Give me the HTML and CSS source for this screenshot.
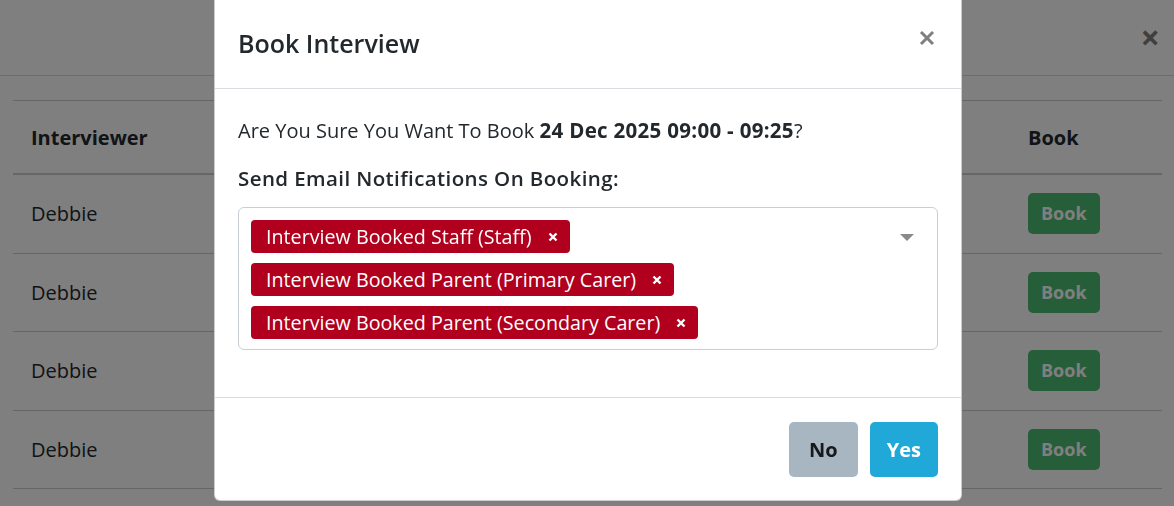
FILE: index.html
```html
<!DOCTYPE html>
<html lang="en">
<head>
<meta charset="utf-8">
<title>Book Interview</title>
<link rel="stylesheet" href="styles.css">
</head>
<body>
<div class="page">
  <div class="page-header">
    <span class="page-close" aria-label="Close">&times;</span>
  </div>
  <div class="table">
    <div class="row head">
      <div class="cell">Interviewer</div>
      <div class="cell"></div>
      <div class="cell">Book</div>
    </div>
    <div class="row">
      <div class="cell">Debbie</div>
      <div class="cell"></div>
      <div class="cell"><span class="btn-book">Book</span></div>
    </div>
    <div class="row">
      <div class="cell">Debbie</div>
      <div class="cell"></div>
      <div class="cell"><span class="btn-book">Book</span></div>
    </div>
    <div class="row">
      <div class="cell">Debbie</div>
      <div class="cell"></div>
      <div class="cell"><span class="btn-book">Book</span></div>
    </div>
    <div class="row">
      <div class="cell">Debbie</div>
      <div class="cell"></div>
      <div class="cell"><span class="btn-book">Book</span></div>
    </div>
  </div>
</div>

<div class="backdrop"></div>

<div class="modal">
  <div class="modal-header">
    <h5 class="modal-title">Book Interview</h5>
    <span class="modal-close" aria-label="Close">
      <svg width="16" height="16" viewBox="0 0 16 16"><path d="M2 2 L14 14 M14 2 L2 14" stroke="#808080" stroke-width="3" stroke-linecap="butt"/></svg>
    </span>
  </div>
  <div class="modal-body">
    <p class="question">Are You Sure You Want To Book <b class="date">24 Dec 2025 09:00 - 09:25</b>?</p>
    <div class="label">Send Email Notifications On Booking:</div>
    <div class="select">
      <div class="tags">
        <span class="tag">Interview Booked Staff (Staff)<span class="tag-x"><svg width="10" height="10" viewBox="0 0 10 10"><path d="M1.5 1.5 L8.5 8.5 M8.5 1.5 L1.5 8.5" stroke="#fff" stroke-width="2.4"/></svg></span></span>
        <span class="tag">Interview Booked Parent (Primary Carer)<span class="tag-x"><svg width="10" height="10" viewBox="0 0 10 10"><path d="M1.5 1.5 L8.5 8.5 M8.5 1.5 L1.5 8.5" stroke="#fff" stroke-width="2.4"/></svg></span></span>
        <span class="tag">Interview Booked Parent (Secondary Carer)<span class="tag-x"><svg width="10" height="10" viewBox="0 0 10 10"><path d="M1.5 1.5 L8.5 8.5 M8.5 1.5 L1.5 8.5" stroke="#fff" stroke-width="2.4"/></svg></span></span>
      </div>
      <span class="caret"></span>
    </div>
  </div>
  <div class="modal-footer">
    <span class="btn btn-no">No</span>
    <span class="btn btn-yes">Yes</span>
  </div>
</div>
</body>
</html>
```

FILE: styles.css
```css
* { box-sizing: border-box; }

html, body {
  margin: 0;
  padding: 0;
  background: #fff;
  font-family: "Open Sans", "Noto Sans", sans-serif;
  color: #23282c;
  font-size: 20px;
  overflow: hidden;
}

.page {
  height: 506px;
}

.page-header {
  height: 76px;
  border-bottom: 1px solid #d8dbe0;
  display: flex;
  justify-content: flex-end;
  align-items: flex-start;
  padding: 17px 14px 0 0;
}

.page-close {
  font-size: 34px;
  font-weight: 700;
  line-height: 40px;
  color: #000;
  opacity: 0.5;
}

.table {
  margin: 24px 12px 0 13px;
  border-top: 1px solid #c8ced3;
}

.row {
  display: grid;
  grid-template-columns: 380px 1fr 152px;
  height: 78.5px;
  border-bottom: 1px solid #c8ced3;
  align-items: center;
}

.row.head {
  height: 74px;
  border-bottom: 2px solid #c8ced3;
  font-weight: 700;
}

.cell {
  padding-left: 18px;
}

.btn-book {
  display: inline-block;
  background: #4dbd74;
  color: #fff;
  font-weight: 700;
  font-size: 18px;
  line-height: 25px;
  padding: 8px 13px;
  border-radius: 5px;
}

.backdrop {
  position: fixed;
  inset: 0;
  background: rgba(0, 0, 0, 0.5);
}

.modal {
  position: absolute;
  left: 214px;
  top: -10px;
  width: 748px;
  background: #fff;
  border: 1px solid rgba(0, 0, 0, 0.2);
  border-radius: 6px;
}

.modal-header {
  display: flex;
  justify-content: space-between;
  align-items: flex-start;
  padding: 33px 26px 0 23px;
  height: 98px;
  border-bottom: 1px solid #d8dbe0;
}

.modal-title {
  margin: 0;
  font-size: 25px;
  font-weight: 600;
  line-height: 38px;
  color: #23282c;
}

.modal-close {
  display: flex;
  margin-top: 6px;
}

.modal-body {
  padding: 28px 23px 47px 23px;
}

.question {
  margin: 0;
  line-height: 27px;
}

.date {
  font-size: 20.5px;
  letter-spacing: 0.3px;
}

.label {
  margin-top: 21px;
  font-weight: 600;
  font-size: 20.5px;
  letter-spacing: 0.4px;
  line-height: 27px;
}

.select {
  margin-top: 15px;
  height: 143px;
  border: 1px solid #c8ced3;
  border-radius: 6px;
  display: flex;
  padding: 12px 23px 0 12px;
}

.tags {
  flex: 1;
  display: flex;
  flex-direction: column;
  align-items: flex-start;
  gap: 10px;
}

.tag {
  display: inline-flex;
  align-items: center;
  background: #b0001e;
  color: #fff;
  font-size: 19.7px;
  line-height: 25px;
  padding: 4px 12px 4px 15px;
  border-radius: 4px;
}

.tag-x {
  display: flex;
  margin-left: 16px;
}

.caret {
  margin-top: 14px;
  width: 0;
  height: 0;
  border-left: 7px solid transparent;
  border-right: 7px solid transparent;
  border-top: 7px solid #8a8a8a;
}

.modal-footer {
  border-top: 1px solid #d8dbe0;
  display: flex;
  justify-content: flex-end;
  gap: 12px;
  padding: 24px 23px 23px;
}

.btn {
  display: inline-block;
  font-weight: 700;
  font-size: 20px;
  line-height: 27px;
  padding: 14px 20px;
  border-radius: 5px;
}

.btn-no {
  background: #a7b6c1;
  color: #17191b;
}

.btn-yes {
  background: #20a8d8;
  color: #fff;
  padding-left: 17px;
  padding-right: 17px;
}
```
